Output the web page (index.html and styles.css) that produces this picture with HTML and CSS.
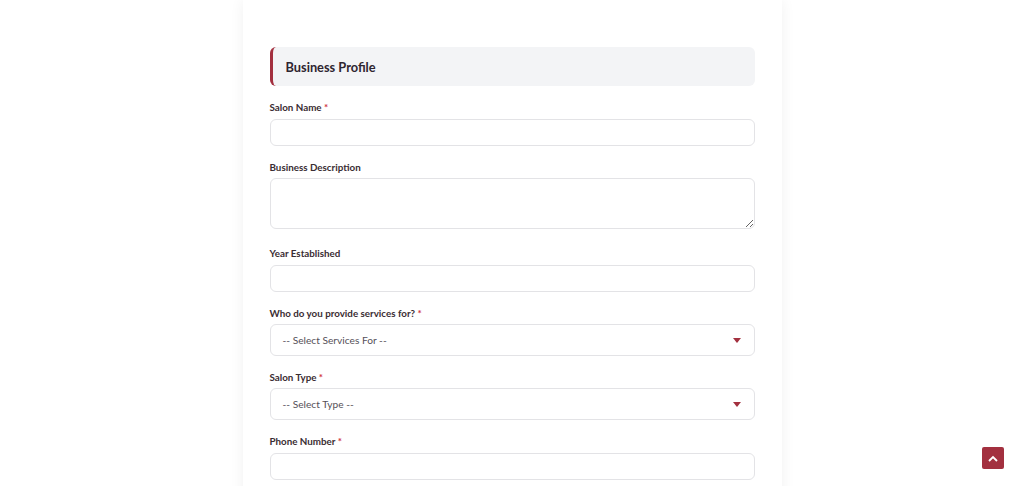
FILE: index.html
```html
<!DOCTYPE html>
<html lang="en">
<head>
<meta charset="utf-8">
<title>Business Profile</title>
<link rel="stylesheet" href="styles.css">
</head>
<body>
<main class="card">
  <div class="section-head"><h2>Business Profile</h2></div>

  <div class="group">
    <label class="label">Salon Name <span class="req">*</span></label>
    <input class="control" type="text">
  </div>

  <div class="group group-area">
    <label class="label">Business Description</label>
    <textarea class="control textarea"></textarea>
  </div>

  <div class="group">
    <label class="label">Year Established</label>
    <input class="control" type="text">
  </div>

  <div class="group">
    <label class="label">Who do you provide services for? <span class="req">*</span></label>
    <div class="select">
      <span>-- Select Services For --</span>
      <svg class="caret" width="8" height="5" viewBox="0 0 8 5"><path d="M0 0h8L4 5z" fill="#a3303f"/></svg>
    </div>
  </div>

  <div class="group">
    <label class="label">Salon Type <span class="req">*</span></label>
    <div class="select">
      <span>-- Select Type --</span>
      <svg class="caret" width="8" height="5" viewBox="0 0 8 5"><path d="M0 0h8L4 5z" fill="#a3303f"/></svg>
    </div>
  </div>

  <div class="group">
    <label class="label">Phone Number <span class="req">*</span></label>
    <input class="control" type="text">
  </div>
</main>

<button class="to-top" aria-label="Back to top">
  <svg width="10" height="7" viewBox="0 0 10 7"><path d="M1 6l4-4 4 4" fill="none" stroke="#fff" stroke-width="1.8"/></svg>
</button>
</body>
</html>
```

FILE: styles.css
```css
html, body {
  margin: 0;
  padding: 0;
  background: #ffffff;
  height: 486px;
  overflow: hidden;
  font-family: Lato, "Open Sans", sans-serif;
}

.card {
  width: 485px;
  margin: 0 auto;
  padding: 47px 27px 40px 27px;
  background: #fff;
  box-shadow: 0 0 14px rgba(0, 0, 0, 0.06);
  min-height: 500px;
}

.section-head {
  height: 39px;
  background: #f3f4f6;
  border-left: 3px solid #a3303f;
  border-radius: 6px;
  display: flex;
  align-items: center;
  padding-left: 13px;
  margin-bottom: 13px;
}

.section-head h2 {
  margin: 0;
  font-size: 12.8px;
  font-weight: 700;
  color: #2e2530;
}

.group {
  margin-bottom: 13px;
}

.group-area {
  margin-bottom: 16px;
}

.label {
  display: block;
  font-size: 9.8px;
  line-height: 16px;
  font-weight: 700;
  color: #3a2d33;
  margin-bottom: 4px;
}

.req {
  color: #d0343f;
}

.control {
  display: block;
  box-sizing: border-box;
  width: 100%;
  height: 27px;
  border: 1px solid #e3e3e6;
  border-radius: 6px;
  background: #fff;
  margin: 0;
  font: inherit;
}

.textarea {
  height: 51px;
  resize: vertical;
  margin-top: -1px;
}

.select {
  box-sizing: border-box;
  height: 32px;
  border: 1px solid #e3e3e6;
  border-radius: 6px;
  display: flex;
  align-items: center;
  justify-content: space-between;
  padding: 0 12px 0 12px;
  margin-top: -1px;
  font-size: 10.2px;
  color: #555058;
}

.caret {
  display: block;
  margin-right: 1px;
}

.to-top {
  position: fixed;
  left: 982px;
  top: 447px;
  width: 22px;
  height: 22px;
  border: none;
  border-radius: 2px;
  background: #a3303f;
  padding: 0;
  display: flex;
  align-items: center;
  justify-content: center;
}
```
